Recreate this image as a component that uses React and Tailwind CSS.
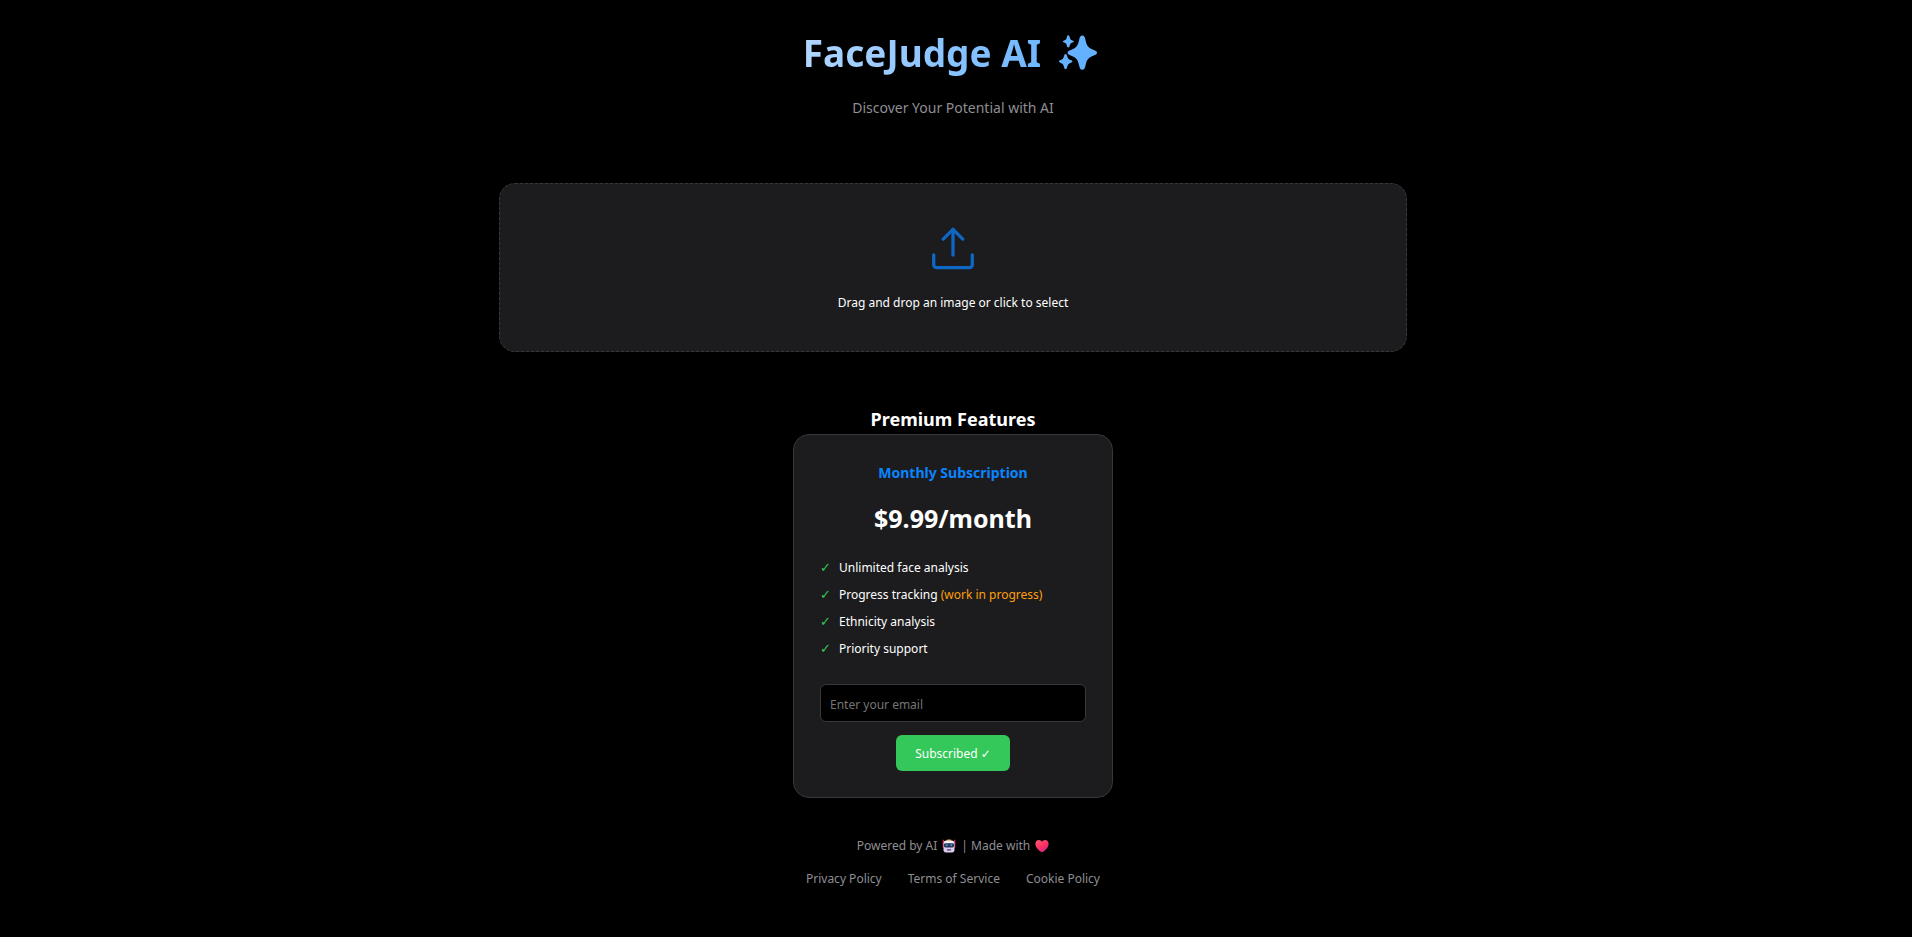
import { useState } from 'react'

const FEATURES = [
  { text: 'Unlimited face analysis' },
  { text: 'Progress tracking', note: '(work in progress)' },
  { text: 'Ethnicity analysis' },
  { text: 'Priority support' },
]

const LINKS = [
  { label: 'Privacy Policy', href: '#privacy' },
  { label: 'Terms of Service', href: '#terms' },
  { label: 'Cookie Policy', href: '#cookies' },
]

function Sparkles() {
  return (
    <svg viewBox="0 0 38 36" className="w-[38px] h-9" fill="#64b1ff" aria-hidden="true">
      <path d="M23.3 0.6c1.9 0 2.6 1.6 3.2 4.4 1.3 6 2.600 7.600 7.800 9.700 2.300 0.900 3.700 1.600 3.700 3s-1.400 2.100-3.700 3c-5.200 2.100-6.500 3.700-7.800 9.700-0.600 2.800-1.300 4.400-3.200 4.400s-2.600-1.600-3.200-4.400c-1.300-6-2.600-7.600-7.800-9.700-2.300-0.900-3.700-1.600-3.700-3s1.400-2.100 3.700-3c5.200-2.100 6.500-3.700 7.800-9.700 0.600-2.800 1.300-4.400 3.200-4.400z" />
      <path d="M9.300 0.300c0.900 0 1.100 0.800 1.500 2.100 0.500 1.800 1 2.400 2.600 3 1 0.400 1.500 0.600 1.500 1.100s-0.500 0.700-1.500 1.100c-1.600 0.600-2.100 1.200-2.600 3-0.400 1.300-0.600 2-1.500 2s-1.100-0.700-1.500-2c-0.500-1.800-1-2.400-2.600-3-1-0.400-1.400-0.600-1.400-1.100s0.400-0.700 1.400-1.100c1.600-0.600 2.100-1.200 2.600-3 0.400-1.300 0.600-2.100 1.500-2.100z" />
      <path d="M6.600 19c1 0 1.300 1 1.700 2.600 0.600 2.100 1.200 2.800 3.200 3.500 1.200 0.400 1.900 0.700 1.900 1.400s-0.700 1-1.900 1.400c-2 0.700-2.600 1.400-3.200 3.500-0.400 1.600-0.700 2.600-1.700 2.600s-1.300-1-1.700-2.600c-0.600-2.100-1.200-2.800-3.200-3.500-1.200-0.400-1.700-0.700-1.700-1.400s0.500-1 1.700-1.400c2-0.700 2.600-1.400 3.200-3.500 0.400-1.600 0.700-2.600 1.700-2.600z" />
    </svg>
  )
}

function UploadIcon() {
  return (
    <svg
      viewBox="0 0 48 48"
      className="w-12 h-12"
      fill="none"
      stroke="#0e67c3"
      strokeWidth="3.3"
      strokeLinecap="round"
      strokeLinejoin="round"
      aria-hidden="true"
    >
      <path d="M24 31V5.500" />
      <path d="M14.200 15.100 24 5.300l9.800 9.800" />
      <path d="M4.700 30.900v9.800a3 3 0 0 0 3 3h32.600a3 3 0 0 0 3-3v-9.800" />
    </svg>
  )
}

function Robot() {
  return (
    <svg viewBox="0 0 14 14" className="w-3.5 h-3.5" aria-hidden="true">
      <path d="M1.300 0.800v8M12.700 0.800v8" stroke="#d6286a" strokeWidth="1.200" />
      <rect x="4.600" y="0.400" width="4.800" height="2.400" rx="1" fill="#f9a11b" />
      <rect x="1.500" y="1.800" width="11" height="11.600" rx="2.600" fill="#dccdf0" />
      <rect x="2.400" y="1.800" width="9.200" height="2.400" rx="1.200" fill="#f6f0ff" />
      <rect x="1.900" y="4.200" width="10.200" height="4.200" rx="1.600" fill="#26364f" />
      <circle cx="4.700" cy="6.200" r="1.100" fill="#3f8fd6" />
      <circle cx="9.300" cy="6.200" r="1.100" fill="#3f8fd6" />
      <rect x="4.800" y="10.300" width="4.400" height="1.200" rx="0.600" fill="#4a3a5c" />
    </svg>
  )
}

function Heart() {
  return (
    <svg viewBox="0 0 14 14" className="w-3.5 h-3.5" aria-hidden="true">
      <defs>
        <linearGradient id="heart" x1="0" y1="0" x2="0.700" y2="1">
          <stop offset="0" stopColor="#ff5a78" />
          <stop offset="0.600" stopColor="#f8315f" />
          <stop offset="1" stopColor="#d0209a" />
        </linearGradient>
      </defs>
      <path
        d="M7 13.300C5.200 12.300 0.400 9 0.400 4.900 0.400 2.600 2 1.100 3.900 1.100c1.300 0 2.500 0.700 3.100 1.900 0.600-1.200 1.800-1.900 3.100-1.900 1.900 0 3.500 1.500 3.500 3.800 0 4.100-4.800 7.400-6.600 8.400z"
        fill="url(#heart)"
      />
    </svg>
  )
}

export default function App() {
  const [email, setEmail] = useState('')

  return (
    <div className="min-h-screen bg-black text-white font-['Noto_Sans','DejaVu_Sans',sans-serif] text-xs leading-5 pl-4 pr-[22px] pt-[27px] pb-12">
      <div className="max-w-[908px] mx-auto flex flex-col items-center">
        {/* Header */}
        <header className="w-full text-center">
          <h1 className="flex items-center justify-center gap-[18px] pr-1.5 text-[37px] leading-[52px] font-bold">
            <span className="bg-linear-to-r from-[#b0d6ff] to-[#70b7ff] bg-clip-text text-transparent">FaceJudge AI</span>
            <Sparkles />
          </h1>
          <p className="mt-[17px] text-sm leading-6 text-[#8e8e93]">Discover Your Potential with AI</p>
        </header>

        {/* Upload */}
        <label className="mt-[63px] w-full flex flex-col items-center gap-[21px] pt-10 pb-[38px] bg-[#1c1c1e] border border-dashed border-[#38383a] rounded-2xl cursor-pointer">
          <UploadIcon />
          <span>Drag and drop an image or click to select</span>
          <input type="file" accept="image/*" className="sr-only" />
        </label>

        {/* Premium */}
        <h2 className="mt-[52px] text-lg leading-[30px] font-bold">Premium Features</h2>
        <section className="w-80 max-w-full bg-[#1c1c1e] border border-[#38383a] rounded-2xl p-[26px] flex flex-col items-center">
          <h3 className="text-sm leading-6 font-bold text-[#0a84ff]">Monthly Subscription</h3>
          <p className="mt-[15px] text-[25px] leading-9 font-bold">$9.99/month</p>
          <ul className="mt-[18px] w-full">
            {FEATURES.map(f => (
              <li key={f.text} className="flex items-center gap-2 leading-[27px]">
                <span className="w-[11px] text-[13px] text-[#34c759]">✓</span>
                <span>
                  {f.text}
                  {f.note && <span className="text-[#ff9f0a]"> {f.note}</span>}
                </span>
              </li>
            ))}
          </ul>
          <input
            type="email"
            aria-label="Email"
            placeholder="Enter your email"
            value={email}
            onChange={e => setEmail(e.target.value)}
            className="mt-[22px] w-full h-[38px] px-[9px] pt-0.5 bg-black border border-[#38383a] rounded-md text-xs placeholder:text-[#757575]"
          />
          <button className="mt-[13px] h-9 px-[19px] pt-0.5 rounded-md bg-[#34c759] text-xs">Subscribed ✓</button>
        </section>

        {/* Footer */}
        <footer className="mt-[38px] flex flex-col items-center gap-[13px] text-xs leading-5 text-[#8e8e93]">
          <p className="flex items-center gap-[5px]">
            <span>Powered by AI</span>
            <Robot />
            <span>| Made with</span>
            <Heart />
          </p>
          <nav className="flex gap-[26px]">
            {LINKS.map(l => (
              <a key={l.label} href={l.href}>{l.label}</a>
            ))}
          </nav>
        </footer>
      </div>
    </div>
  )
}
